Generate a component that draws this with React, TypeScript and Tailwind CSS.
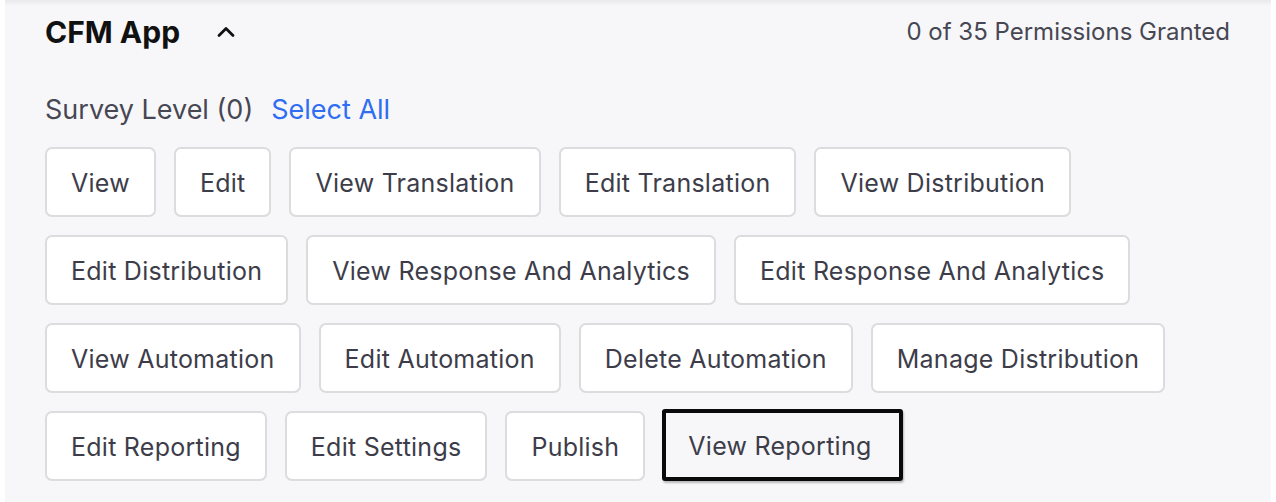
import { ChevronUp } from 'lucide-react'

const rows: Array<Array<{ label: string; highlighted?: boolean }>> = [
  [{ label: 'View' }, { label: 'Edit' }, { label: 'View Translation' }, { label: 'Edit Translation' }, { label: 'View Distribution' }],
  [{ label: 'Edit Distribution' }, { label: 'View Response And Analytics' }, { label: 'Edit Response And Analytics' }],
  [{ label: 'View Automation' }, { label: 'Edit Automation' }, { label: 'Delete Automation' }, { label: 'Manage Distribution' }],
  [{ label: 'Edit Reporting' }, { label: 'Edit Settings' }, { label: 'Publish' }, { label: 'View Reporting', highlighted: true }],
]

export default function App() {
  return (
    <div className="h-[502px] w-[1276px] overflow-hidden bg-white" style={{ fontFamily: 'Inter, "Noto Sans", sans-serif' }}>
      <div className="relative mx-[5px] h-full bg-[#f7f7f9] px-10">
        <div className="pointer-events-none absolute inset-x-0 top-0 h-[6px] bg-gradient-to-b from-[#e9e9ec] to-transparent" />

        <div className="flex items-center justify-between pt-[12px]">
          <div className="flex items-center gap-[32px]">
            <h2 className="text-[30px] font-bold leading-[40px] text-[#111]">CFM App</h2>
            <ChevronUp className="h-[28px] w-[28px] text-[#111]" strokeWidth={2.4} />
          </div>
          <p className="pr-[1px] text-[24px] leading-[40px] text-[#474753]">0 of 35 Permissions Granted</p>
        </div>

        <div className="mt-[40px] flex items-center gap-[18px] text-[27px] leading-[36px]">
          <span className="text-[#474753]">Survey Level (0)</span>
          <span className="text-[#2f6ef2]">Select All</span>
        </div>

        <div className="mt-[19px] flex flex-col gap-[18px]">
          {rows.map((row, i) => (
            <div key={i} className="flex gap-[18px]">
              {row.map((b) =>
                b.highlighted ? (
                  <div
                    key={b.label}
                    className="-mt-[2px] ml-[-1px] flex h-[72px] items-center rounded-[3px] border-[4px] border-[#0a0a0a] pl-[22px] pr-[28px] pt-[3px] text-[25px] tracking-[0.25px] text-[#3d3d4a] shadow-[1px_2px_2px_rgba(0,0,0,0.25)]"
                  >
                    {b.label}
                  </div>
                ) : (
                  <div
                    key={b.label}
                    className="flex h-[70px] items-center rounded-[7px] border-[2px] border-[#dcdcdf] bg-white px-[24px] pt-[3px] text-[25px] tracking-[0.25px] text-[#3d3d4a]"
                  >
                    {b.label}
                  </div>
                ),
              )}
            </div>
          ))}
        </div>
      </div>
    </div>
  )
}
